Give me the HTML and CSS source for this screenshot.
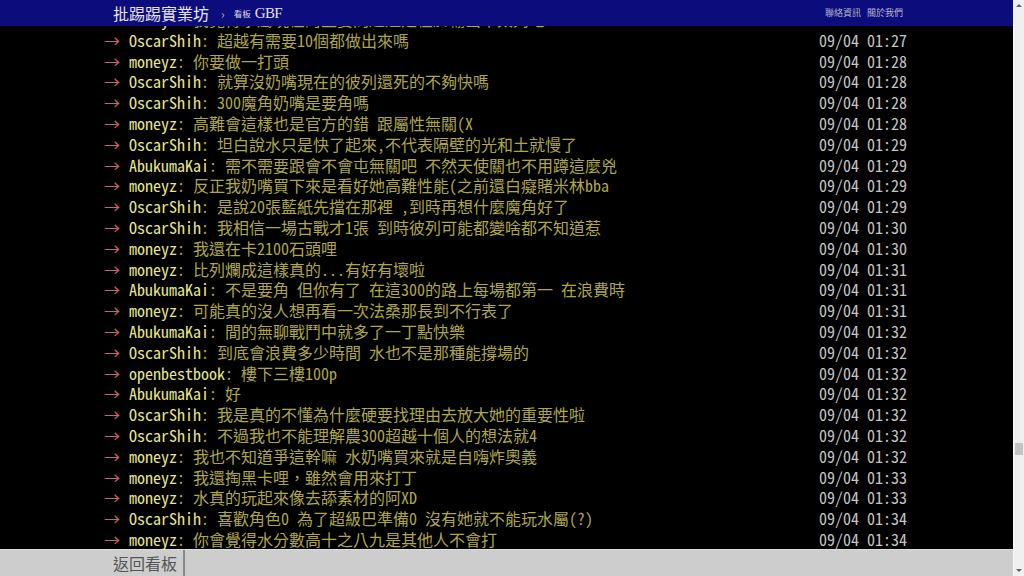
FILE: index.html
```html
<!DOCTYPE html>
<html lang="zh-Hant">
<head>
    <meta charset="UTF-8">
    <title>批踢踢實業坊 › 看板 GBF</title>
    <link rel="stylesheet" href="styles.css">
</head>
<body>
<div class="page">
    <div class="screen">
        <div class="topbar">
            <div class="topbar_left">
                <span class="site_name">批踢踢實業坊</span>
                <span class="crumb_sep">›</span>
                <span class="board_label">看板</span>
                <span class="board_name">GBF</span>
            </div>
            <div class="topbar_right">
                <span>聯絡資訊</span>
                <span>關於我們</span>
            </div>
        </div>

        <div class="main_content">
            <div class="push_list">
                <div class="push"><span class="push_tag">→</span><span class="push_userid">moneyz</span><span class="push_content">: 我覺得水屬現在的主要問題還是在於輸出不太夠吧</span><span class="push_time"></span></div>
                <div class="push"><span class="push_tag">→</span><span class="push_userid">OscarShih</span><span class="push_content">: 超越有需要10個都做出來嗎</span><span class="push_time">09/04 01:27</span></div>
                <div class="push"><span class="push_tag">→</span><span class="push_userid">moneyz</span><span class="push_content">: 你要做一打頭</span><span class="push_time">09/04 01:28</span></div>
                <div class="push"><span class="push_tag">→</span><span class="push_userid">OscarShih</span><span class="push_content">: 就算沒奶嘴現在的彼列還死的不夠快嗎</span><span class="push_time">09/04 01:28</span></div>
                <div class="push"><span class="push_tag">→</span><span class="push_userid">OscarShih</span><span class="push_content">: 300魔角奶嘴是要角嗎</span><span class="push_time">09/04 01:28</span></div>
                <div class="push"><span class="push_tag">→</span><span class="push_userid">moneyz</span><span class="push_content">: 高難會這樣也是官方的錯 跟屬性無關(X</span><span class="push_time">09/04 01:28</span></div>
                <div class="push"><span class="push_tag">→</span><span class="push_userid">OscarShih</span><span class="push_content">: 坦白說水只是快了起來,不代表隔壁的光和土就慢了</span><span class="push_time">09/04 01:29</span></div>
                <div class="push"><span class="push_tag">→</span><span class="push_userid">AbukumaKai</span><span class="push_content">: 需不需要跟會不會屯無關吧 不然天使關也不用蹲這麼兇</span><span class="push_time">09/04 01:29</span></div>
                <div class="push"><span class="push_tag">→</span><span class="push_userid">moneyz</span><span class="push_content">: 反正我奶嘴買下來是看好她高難性能(之前還白癡賭米林bba</span><span class="push_time">09/04 01:29</span></div>
                <div class="push"><span class="push_tag">→</span><span class="push_userid">OscarShih</span><span class="push_content">: 是說20張藍紙先擋在那裡 ,到時再想什麼魔角好了</span><span class="push_time">09/04 01:29</span></div>
                <div class="push"><span class="push_tag">→</span><span class="push_userid">OscarShih</span><span class="push_content">: 我相信一場古戰才1張 到時彼列可能都變啥都不知道惹</span><span class="push_time">09/04 01:30</span></div>
                <div class="push"><span class="push_tag">→</span><span class="push_userid">moneyz</span><span class="push_content">: 我還在卡2100石頭哩</span><span class="push_time">09/04 01:30</span></div>
                <div class="push"><span class="push_tag">→</span><span class="push_userid">moneyz</span><span class="push_content">: 比列爛成這樣真的...有好有壞啦</span><span class="push_time">09/04 01:31</span></div>
                <div class="push"><span class="push_tag">→</span><span class="push_userid">AbukumaKai</span><span class="push_content">: 不是要角 但你有了 在這300的路上每場都第一 在浪費時</span><span class="push_time">09/04 01:31</span></div>
                <div class="push"><span class="push_tag">→</span><span class="push_userid">moneyz</span><span class="push_content">: 可能真的沒人想再看一次法桑那長到不行表了</span><span class="push_time">09/04 01:31</span></div>
                <div class="push"><span class="push_tag">→</span><span class="push_userid">AbukumaKai</span><span class="push_content">: 間的無聊戰鬥中就多了一丁點快樂</span><span class="push_time">09/04 01:32</span></div>
                <div class="push"><span class="push_tag">→</span><span class="push_userid">OscarShih</span><span class="push_content">: 到底會浪費多少時間 水也不是那種能撐場的</span><span class="push_time">09/04 01:32</span></div>
                <div class="push"><span class="push_tag">→</span><span class="push_userid">openbestbook</span><span class="push_content">: 樓下三樓100p</span><span class="push_time">09/04 01:32</span></div>
                <div class="push"><span class="push_tag">→</span><span class="push_userid">AbukumaKai</span><span class="push_content">: 好</span><span class="push_time">09/04 01:32</span></div>
                <div class="push"><span class="push_tag">→</span><span class="push_userid">OscarShih</span><span class="push_content">: 我是真的不懂為什麼硬要找理由去放大她的重要性啦</span><span class="push_time">09/04 01:32</span></div>
                <div class="push"><span class="push_tag">→</span><span class="push_userid">OscarShih</span><span class="push_content">: 不過我也不能理解農300超越十個人的想法就4</span><span class="push_time">09/04 01:32</span></div>
                <div class="push"><span class="push_tag">→</span><span class="push_userid">moneyz</span><span class="push_content">: 我也不知道爭這幹嘛 水奶嘴買來就是自嗨炸奧義</span><span class="push_time">09/04 01:32</span></div>
                <div class="push"><span class="push_tag">→</span><span class="push_userid">moneyz</span><span class="push_content">: 我還掏黑卡哩，雖然會用來打丁</span><span class="push_time">09/04 01:33</span></div>
                <div class="push"><span class="push_tag">→</span><span class="push_userid">moneyz</span><span class="push_content">: 水真的玩起來像去舔素材的阿XD</span><span class="push_time">09/04 01:33</span></div>
                <div class="push"><span class="push_tag">→</span><span class="push_userid">OscarShih</span><span class="push_content">: 喜歡角色0 為了超級巴準備0 沒有她就不能玩水屬(?)</span><span class="push_time">09/04 01:34</span></div>
                <div class="push"><span class="push_tag">→</span><span class="push_userid">moneyz</span><span class="push_content">: 你會覺得水分數高十之八九是其他人不會打</span><span class="push_time">09/04 01:34</span></div>
            </div>
        </div>

        <div class="bottombar">
            <span class="back_link">返回看板</span>
        </div>
    </div>

    <!-- 右側捲軸 -->
    <div class="scrollbar">
        <div class="scroll_btn"><span class="arrow_up"></span></div>
        <div class="scroll_track"><div class="scroll_thumb"></div></div>
        <div class="scroll_btn"><span class="arrow_down"></span></div>
    </div>
</div>
</body>
</html>
```

FILE: styles.css
```css
* {
    box-sizing: border-box;
}

body {
    margin: 0;
    background-color: #000;
    font-family: "Noto Sans Mono CJK TC", "Liberation Mono", "Noto Sans CJK TC", monospace;
}

.page {
    display: flex;
    width: 1024px;
    height: 576px;
    overflow: hidden;
}

.screen {
    flex: 1;
    display: flex;
    flex-direction: column;
    min-width: 0;
}

/* 上方導覽列 */
.topbar {
    height: 26px;
    flex-shrink: 0;
    display: flex;
    align-items: center;
    justify-content: space-between;
    padding: 0 110px 0 113px;
    background-color: #0c0c7c;
    font-family: "Noto Sans CJK TC", sans-serif;
    position: relative;
    z-index: 1;
}

.topbar_left {
    display: flex;
    align-items: center;
}

.site_name {
    color: #e4e4e4;
    font-size: 16px;
    line-height: 26px;
}

.crumb_sep {
    color: #b0b0c0;
    font-size: 12px;
    margin: 0 9px 0 12px;
}

.board_label {
    color: #d8d8e0;
    font-size: 8.5px;
    margin-right: 4px;
}

.board_name {
    color: #e4e4e4;
    font-family: "Liberation Serif", serif;
    font-size: 15px;
    letter-spacing: -0.6px;
}

.topbar_right {
    display: flex;
    gap: 6px;
    color: #b4b4cc;
    font-size: 9px;
    margin-top: -1px;
}

/* 推文列表 */
.main_content {
    flex: 1;
    overflow: hidden;
}

.push_list {
    margin-top: -17px;
    padding: 0 106px 0 104px;
}

.push {
    display: flex;
    height: 20.8px;
    line-height: 20.8px;
    font-size: 16px;
    white-space: pre;
}

.push_tag {
    width: 25px;
    color: #d0606c;
}

.push_userid {
    color: #e6e68e;
}

.push_content {
    color: #aea64a;
}

.push_time {
    margin-left: auto;
    color: #c4c4c4;
}

/* 下方列 */
.bottombar {
    height: 27px;
    flex-shrink: 0;
    display: flex;
    background-color: #cdcdcd;
    border-top: 1px solid #dedede;
    font-family: "Noto Sans CJK TC", sans-serif;
}

.back_link {
    padding: 0 6px 0 113px;
    border-right: 2px solid #8a8a8a;
    color: #555;
    font-size: 16px;
    line-height: 26px;
}

/* 捲軸 */
.scrollbar {
    width: 11px;
    display: flex;
    flex-direction: column;
    background-color: #f0f0f0;
    border-left: 1px solid #fafafa;
}

.scroll_btn {
    height: 11px;
    display: flex;
    align-items: center;
    justify-content: center;
}

.arrow_up {
    border-left: 3px solid transparent;
    border-right: 3px solid transparent;
    border-bottom: 3px solid #606060;
}

.arrow_down {
    border-left: 3px solid transparent;
    border-right: 3px solid transparent;
    border-top: 3px solid #606060;
}

.scroll_track {
    flex: 1;
    padding-top: 432px;
}

.scroll_thumb {
    width: 8px;
    height: 12px;
    margin-left: 1px;
    background-color: #c4c4c4;
}
```
